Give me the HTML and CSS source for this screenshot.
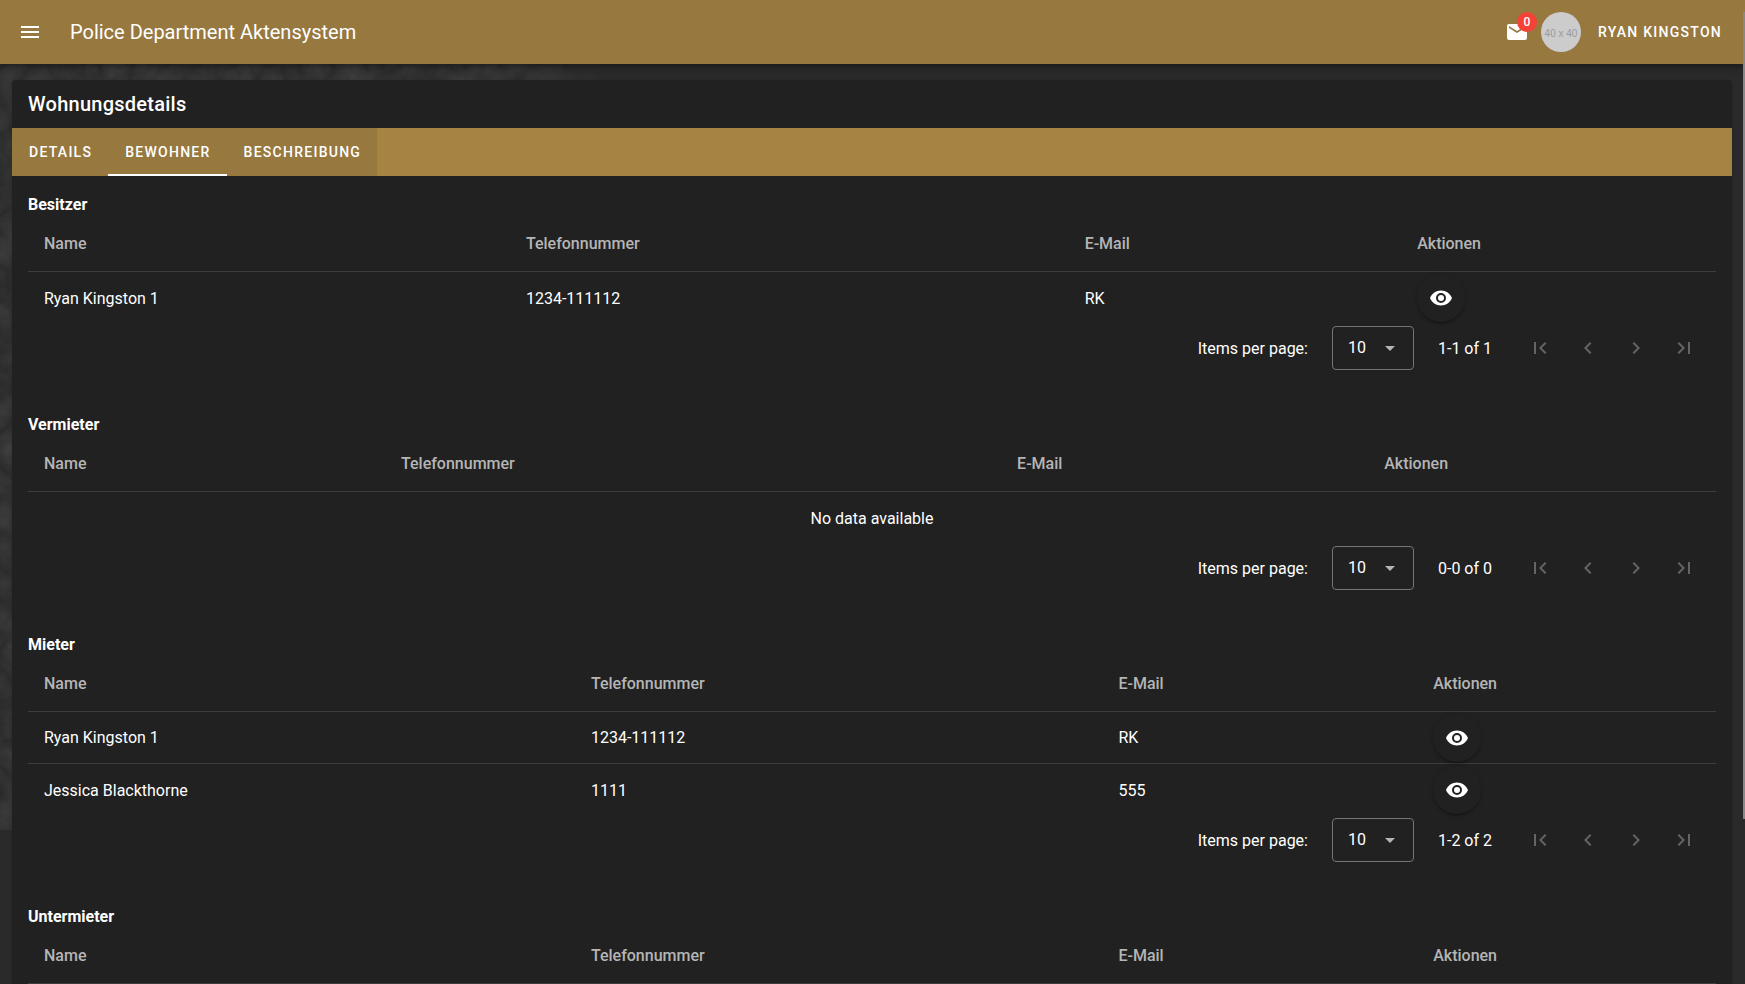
FILE: index.html
```html
<!DOCTYPE html>
<html lang="de">
<head>
<meta charset="utf-8">
<title>Police Department Aktensystem</title>
<link rel="stylesheet" href="styles.css">
</head>
<body>
<svg class="sprite" aria-hidden="true">
  <symbol id="eye" viewBox="0 0 24 24"><path d="M12,9A3,3 0 0,0 9,12A3,3 0 0,0 12,15A3,3 0 0,0 15,12A3,3 0 0,0 12,9M12,17A5,5 0 0,1 7,12A5,5 0 0,1 12,7A5,5 0 0,1 17,12A5,5 0 0,1 12,17M12,4.5C7,4.5 2.73,7.61 1,12C2.73,16.39 7,19.5 12,19.5C17,19.5 21.27,16.39 23,12C21.27,7.61 17,4.5 12,4.5Z"/></symbol>
  <symbol id="first" viewBox="0 0 24 24"><path d="M18.41,16.59L13.82,12L18.41,7.41L17,6L11,12L17,18L18.41,16.59M6,6H8V18H6V6Z"/></symbol>
  <symbol id="prev" viewBox="0 0 24 24"><path d="M15.41,16.58L10.83,12L15.41,7.41L14,6L8,12L14,18L15.41,16.58Z"/></symbol>
  <symbol id="next" viewBox="0 0 24 24"><path d="M8.59,16.58L13.17,12L8.59,7.41L10,6L16,12L10,18L8.59,16.58Z"/></symbol>
  <symbol id="last" viewBox="0 0 24 24"><path d="M5.59,7.41L10.18,12L5.59,16.59L7,18L13,12L7,6L5.59,7.41M16,6H18V18H16V6Z"/></symbol>
  <symbol id="caret" viewBox="0 0 24 24"><path d="M7,10L12,15L17,10H7Z"/></symbol>
</svg>
<svg class="backdrop" aria-hidden="true">
  <filter id="grain" x="0" y="0" width="100%" height="100%">
    <feTurbulence type="turbulence" baseFrequency="0.03" numOctaves="4" seed="7"/>
    <feColorMatrix values="0 0 0 0 1  0 0 0 0 1  0 0 0 0 1  0.12 0 0 0 0"/>
  </filter>
  <rect width="100%" height="100%" filter="url(#grain)"/>
</svg>

<header class="app-bar">
  <button class="icon-btn" aria-label="Menü"><svg class="icon" viewBox="0 0 24 24"><path d="M3,6H21V8H3V6M3,11H21V13H3V11M3,16H21V18H3V16Z"/></svg></button>
  <h1 class="app-title">Police Department Aktensystem</h1>
  <button class="mail" aria-label="Nachrichten"><svg class="icon" viewBox="0 0 24 24"><path d="M20,8L12,13L4,8V6L12,11L20,6M20,4H4C2.89,4 2,4.89 2,6V18A2,2 0 0,0 4,20H20A2,2 0 0,0 22,18V6C22,4.89 21.1,4 20,4Z"/></svg><span class="badge">0</span></button>
  <span class="avatar">40 x 40</span>
  <button class="user">Ryan Kingston</button>
</header>

<main class="content">
  <article class="card">
    <h2 class="card-title">Wohnungsdetails</h2>
    <nav class="tabs">
      <button class="tab">Details</button>
      <button class="tab tab-active">Bewohner</button>
      <button class="tab">Beschreibung</button>
    </nav>
    <div class="panel">
      <section class="group">
        <h3 class="group-title">Besitzer</h3>
        <table class="table cols-owner">
          <colgroup><col class="c-name"><col class="c-phone"><col class="c-mail"><col></colgroup>
          <thead><tr><th>Name</th><th>Telefonnummer</th><th>E-Mail</th><th>Aktionen</th></tr></thead>
          <tbody><tr><td>Ryan Kingston 1</td><td>1234-111112</td><td>RK</td><td class="actions"><button class="view-btn" aria-label="Ansehen"><svg class="icon"><use href="#eye"/></svg></button></td></tr></tbody>
        </table>
        <div class="footer">
          <label for="pp1">Items per page:</label>
          <span class="select"><select id="pp1"><option>10</option></select><svg class="icon caret"><use href="#caret"/></svg></span>
          <span class="range">1-1 of 1</span>
          <div class="pager"><button disabled aria-label="Erste Seite"><svg class="icon"><use href="#first"/></svg></button><button disabled aria-label="Vorherige Seite"><svg class="icon"><use href="#prev"/></svg></button><button disabled aria-label="Nächste Seite"><svg class="icon"><use href="#next"/></svg></button><button disabled aria-label="Letzte Seite"><svg class="icon"><use href="#last"/></svg></button></div>
        </div>
      </section>

      <section class="group">
        <h3 class="group-title">Vermieter</h3>
        <table class="table cols-landlord">
          <colgroup><col class="c-name"><col class="c-phone"><col class="c-mail"><col></colgroup>
          <thead><tr><th>Name</th><th>Telefonnummer</th><th>E-Mail</th><th>Aktionen</th></tr></thead>
          <tbody><tr><td class="empty" colspan="4">No data available</td></tr></tbody>
        </table>
        <div class="footer">
          <label for="pp2">Items per page:</label>
          <span class="select"><select id="pp2"><option>10</option></select><svg class="icon caret"><use href="#caret"/></svg></span>
          <span class="range">0-0 of 0</span>
          <div class="pager"><button disabled aria-label="Erste Seite"><svg class="icon"><use href="#first"/></svg></button><button disabled aria-label="Vorherige Seite"><svg class="icon"><use href="#prev"/></svg></button><button disabled aria-label="Nächste Seite"><svg class="icon"><use href="#next"/></svg></button><button disabled aria-label="Letzte Seite"><svg class="icon"><use href="#last"/></svg></button></div>
        </div>
      </section>

      <section class="group">
        <h3 class="group-title">Mieter</h3>
        <table class="table cols-tenant">
          <colgroup><col class="c-name"><col class="c-phone"><col class="c-mail"><col></colgroup>
          <thead><tr><th>Name</th><th>Telefonnummer</th><th>E-Mail</th><th>Aktionen</th></tr></thead>
          <tbody>
            <tr><td>Ryan Kingston 1</td><td>1234-111112</td><td>RK</td><td class="actions"><button class="view-btn" aria-label="Ansehen"><svg class="icon"><use href="#eye"/></svg></button></td></tr>
            <tr><td>Jessica Blackthorne</td><td>1111</td><td>555</td><td class="actions"><button class="view-btn" aria-label="Ansehen"><svg class="icon"><use href="#eye"/></svg></button></td></tr>
          </tbody>
        </table>
        <div class="footer">
          <label for="pp3">Items per page:</label>
          <span class="select"><select id="pp3"><option>10</option></select><svg class="icon caret"><use href="#caret"/></svg></span>
          <span class="range">1-2 of 2</span>
          <div class="pager"><button disabled aria-label="Erste Seite"><svg class="icon"><use href="#first"/></svg></button><button disabled aria-label="Vorherige Seite"><svg class="icon"><use href="#prev"/></svg></button><button disabled aria-label="Nächste Seite"><svg class="icon"><use href="#next"/></svg></button><button disabled aria-label="Letzte Seite"><svg class="icon"><use href="#last"/></svg></button></div>
        </div>
      </section>

      <section class="group">
        <h3 class="group-title">Untermieter</h3>
        <table class="table cols-tenant">
          <colgroup><col class="c-name"><col class="c-phone"><col class="c-mail"><col></colgroup>
          <thead><tr><th>Name</th><th>Telefonnummer</th><th>E-Mail</th><th>Aktionen</th></tr></thead>
        </table>
      </section>
    </div>
  </article>
</main>
<div class="scroll-thumb"></div>
</body>
</html>
```

FILE: styles.css
```css
* { box-sizing: border-box; }

body {
  margin: 0;
  background: #2a2a2a;
  color: #fff;
  font: 16px/24px Roboto, "Liberation Sans", sans-serif;
}

h1, h2, h3 { margin: 0; }

button {
  padding: 0;
  border: 0;
  background: none;
  color: inherit;
  font: inherit;
}

.sprite { position: absolute; width: 0; height: 0; }

.icon { display: block; width: 24px; height: 24px; fill: currentColor; }

.backdrop {
  position: absolute;
  top: 0;
  left: 0;
  width: 620px;
  height: 830px;
  z-index: -1;
  mask-image: linear-gradient(to right, #000 80%, transparent);
}

.app-bar {
  position: relative;
  display: flex;
  align-items: center;
  height: 64px;
  padding: 0 23px 0 6px;
  background: #97783f;
  box-shadow: 0 2px 4px -1px rgba(0, 0, 0, .2), 0 4px 5px rgba(0, 0, 0, .14), 0 1px 10px rgba(0, 0, 0, .12);
}

.icon-btn { display: grid; place-items: center; width: 48px; height: 48px; }

.app-title { flex: 1; padding-left: 16px; font-size: 20px; font-weight: 400; }

.mail { position: relative; margin-right: 12px; }

.badge {
  position: absolute;
  left: 12px;
  bottom: 12px;
  min-width: 20px;
  height: 20px;
  padding: 4px 6px;
  border-radius: 10px;
  background: #f44336;
  font-size: 12px;
  font-weight: 500;
  line-height: 12px;
}

.avatar {
  display: grid;
  place-items: center;
  width: 40px;
  height: 40px;
  padding-top: 2px;
  border-radius: 50%;
  background: #ccc;
  color: #999;
  font: 10px "Liberation Sans", sans-serif;
}

.user {
  margin-left: 17px;
  font-size: 14px;
  font-weight: 500;
  letter-spacing: .09em;
  text-transform: uppercase;
}

.content { padding: 16px 13px 0 12px; }

.card {
  border-radius: 4px 4px 0 0;
  background: #212121;
  box-shadow: 0 2px 1px -1px rgba(0, 0, 0, .2), 0 1px 1px rgba(0, 0, 0, .14), 0 1px 3px rgba(0, 0, 0, .12);
}

.card-title {
  padding: 8px 16px;
  font-size: 20px;
  font-weight: 500;
  letter-spacing: .0125em;
  line-height: 32px;
}

.tabs { display: flex; height: 48px; background: #a58443; }

.tab {
  padding: 0 16px 0 17px;
  background: #97783f;
  font-size: 14px;
  font-weight: 500;
  letter-spacing: .09em;
  text-transform: uppercase;
}

.tab-active { box-shadow: inset 0 -2px #fff; }

.panel { padding: 16px 16px 0; }

.group + .group { margin-top: 40px; }

.group-title { height: 24px; padding-top: 1px; font-size: 16px; font-weight: 700; }

.table { width: 100%; table-layout: fixed; border-collapse: separate; border-spacing: 0; }

.table th, .table td { padding: 0 16px; text-align: left; }

.table th {
  height: 56px;
  border-bottom: 1px solid #3c3c3c;
  color: #b5b5b5;
  font-weight: 500;
}

.table td { height: 52px; }

.table tbody tr:not(:last-child) td { border-bottom: 1px solid #3c3c3c; }

.table tbody tr:last-child td:not(.actions) { padding-top: 2px; }

.table .empty { text-align: center; }

.cols-owner .c-name { width: 28.55%; }
.cols-owner .c-phone { width: 33.1%; }
.cols-owner .c-mail { width: 19.7%; }

.cols-landlord .c-name { width: 21.15%; }
.cols-landlord .c-phone { width: 36.5%; }
.cols-landlord .c-mail { width: 21.75%; }

.cols-tenant .c-name { width: 32.4%; }
.cols-tenant .c-phone { width: 31.25%; }
.cols-tenant .c-mail { width: 18.65%; }

.view-btn {
  display: grid;
  place-items: center;
  width: 48px;
  height: 48px;
  border-radius: 50%;
  background: #212121;
  box-shadow: 0 3px 1px -2px rgba(0, 0, 0, .2), 0 2px 2px rgba(0, 0, 0, .14), 0 1px 5px rgba(0, 0, 0, .12);
}

.footer {
  display: flex;
  align-items: center;
  justify-content: flex-end;
  gap: 24px;
  height: 48px;
  padding-right: 8px;
}

.footer label, .range { padding-top: 2px; }

.select { position: relative; }

.select select {
  display: block;
  appearance: none;
  width: 82px;
  height: 44px;
  padding: 0 15px;
  border: 1px solid #757575;
  border-radius: 4px;
  background: #212121;
  color: #fff;
  font: inherit;
}

.caret {
  position: absolute;
  top: 10px;
  right: 12px;
  color: #b5b5b5;
  pointer-events: none;
}

.pager { display: flex; }

.pager button { display: grid; place-items: center; width: 48px; height: 48px; color: #646464; }

.scroll-thumb {
  position: absolute;
  top: 12px;
  right: 0;
  width: 2px;
  height: 82vh;
  background: #888;
}
```
